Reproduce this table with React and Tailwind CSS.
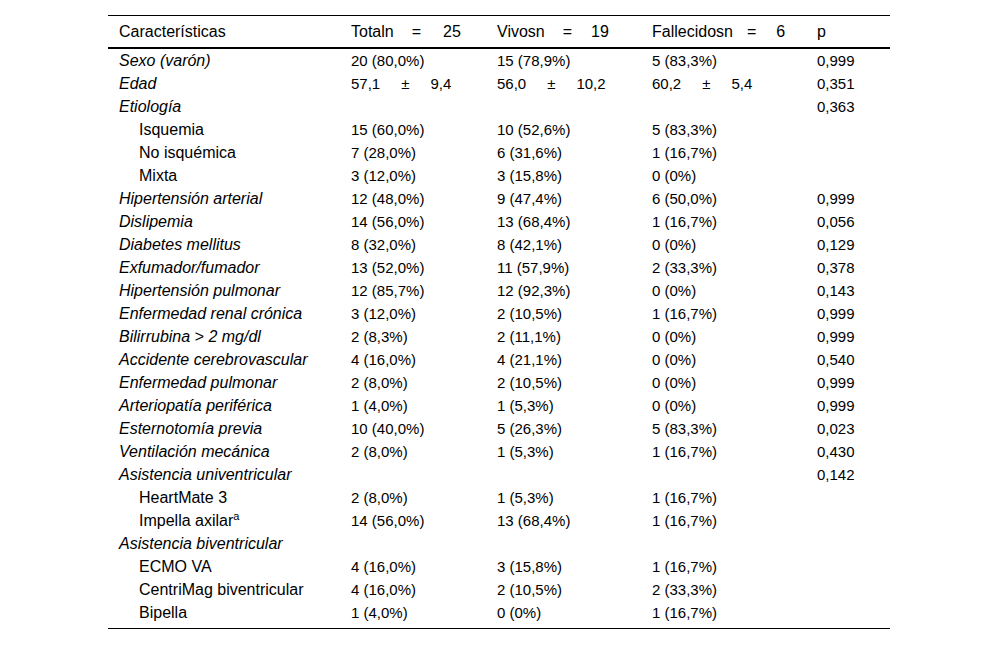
import React from "react";

const rows = [
  { label: "Sexo (varón)", it: true, c: ["20 (80,0%)", "15 (78,9%)", "5 (83,3%)", "0,999"] },
  { label: "Edad", it: true, pm: [["57,1", "9,4"], ["56,0", "10,2"], ["60,2", "5,4"]], p: "0,351" },
  { label: "Etiología", it: true, c: ["", "", "", "0,363"] },
  { label: "Isquemia", ind: true, c: ["15 (60,0%)", "10 (52,6%)", "5 (83,3%)", ""] },
  { label: "No isquémica", ind: true, c: ["7 (28,0%)", "6 (31,6%)", "1 (16,7%)", ""] },
  { label: "Mixta", ind: true, c: ["3 (12,0%)", "3 (15,8%)", "0 (0%)", ""] },
  { label: "Hipertensión arterial", it: true, c: ["12 (48,0%)", "9 (47,4%)", "6 (50,0%)", "0,999"] },
  { label: "Dislipemia", it: true, c: ["14 (56,0%)", "13 (68,4%)", "1 (16,7%)", "0,056"] },
  { label: "Diabetes mellitus", it: true, c: ["8 (32,0%)", "8 (42,1%)", "0 (0%)", "0,129"] },
  { label: "Exfumador/fumador", it: true, c: ["13 (52,0%)", "11 (57,9%)", "2 (33,3%)", "0,378"] },
  { label: "Hipertensión pulmonar", it: true, c: ["12 (85,7%)", "12 (92,3%)", "0 (0%)", "0,143"] },
  { label: "Enfermedad renal crónica", it: true, c: ["3 (12,0%)", "2 (10,5%)", "1 (16,7%)", "0,999"] },
  { label: "Bilirrubina > 2 mg/dl", it: true, c: ["2 (8,3%)", "2 (11,1%)", "0 (0%)", "0,999"] },
  { label: "Accidente cerebrovascular", it: true, c: ["4 (16,0%)", "4 (21,1%)", "0 (0%)", "0,540"] },
  { label: "Enfermedad pulmonar", it: true, c: ["2 (8,0%)", "2 (10,5%)", "0 (0%)", "0,999"] },
  { label: "Arteriopatía periférica", it: true, c: ["1 (4,0%)", "1 (5,3%)", "0 (0%)", "0,999"] },
  { label: "Esternotomía previa", it: true, c: ["10 (40,0%)", "5 (26,3%)", "5 (83,3%)", "0,023"] },
  { label: "Ventilación mecánica", it: true, c: ["2 (8,0%)", "1 (5,3%)", "1 (16,7%)", "0,430"] },
  { label: "Asistencia univentricular", it: true, c: ["", "", "", "0,142"] },
  { label: "HeartMate 3", ind: true, c: ["2 (8,0%)", "1 (5,3%)", "1 (16,7%)", ""] },
  { label: "Impella axilar", sup: "a", ind: true, c: ["14 (56,0%)", "13 (68,4%)", "1 (16,7%)", ""] },
  { label: "Asistencia biventricular", it: true, c: ["", "", "", ""] },
  { label: "ECMO VA", ind: true, c: ["4 (16,0%)", "3 (15,8%)", "1 (16,7%)", ""] },
  { label: "CentriMag biventricular", ind: true, c: ["4 (16,0%)", "2 (10,5%)", "2 (33,3%)", ""] },
  { label: "Bipella", ind: true, c: ["1 (4,0%)", "0 (0%)", "1 (16,7%)", ""] },
];

function PM({ a, b }) {
  return (
    <span>
      {a}
      <span className="ml-[21px]">±</span>
      <span className="ml-[21px]">{b}</span>
    </span>
  );
}

export default function App() {
  const grid = "grid grid-cols-[232px_146px_155px_165px_84px]";
  return (
    <div
      className="w-[1000px] h-[645px] bg-white text-[#000] text-[15px]"
      style={{ fontFamily: '"Liberation Sans", Arial, sans-serif' }}
    >
      <div className="ml-[108px] w-[782px] pt-[15px]">
        <div className="border-t border-black">
          <div className={`${grid} h-[33px] items-center border-b-2 border-black text-[16px]`}>
            <div className="pl-[11px]">Características</div>
            <div className="pl-[11px] whitespace-nowrap">
              Totaln<span className="ml-[18px]">=</span><span className="ml-[22px]">25</span>
            </div>
            <div className="pl-[11px] whitespace-nowrap">
              Vivosn<span className="ml-[18px]">=</span><span className="ml-[19px]">19</span>
            </div>
            <div className="pl-[11px] whitespace-nowrap">
              Fallecidosn<span className="ml-[14px]">=</span><span className="ml-[20px]">6</span>
            </div>
            <div className="pl-[11px]">p</div>
          </div>
          <div className="border-b border-black pt-0 pb-[4px]">
            {rows.map((r, i) => (
              <div key={i} className={`${grid} h-[23px] items-center leading-[23px]`}>
                <div className={`${r.ind ? "pl-[31px]" : "pl-[11px]"} ${r.it ? "italic" : ""} whitespace-nowrap text-[16px]`}>
                  {r.label}
                  {r.sup && (
                    <span className="text-[11px] leading-none relative -top-[6px]">{r.sup}</span>
                  )}
                </div>
                {r.pm ? (
                  <>
                    <div className="pl-[11px] whitespace-nowrap"><PM a={r.pm[0][0]} b={r.pm[0][1]} /></div>
                    <div className="pl-[11px] whitespace-nowrap"><PM a={r.pm[1][0]} b={r.pm[1][1]} /></div>
                    <div className="pl-[11px] whitespace-nowrap"><PM a={r.pm[2][0]} b={r.pm[2][1]} /></div>
                    <div className="pl-[11px]">{r.p}</div>
                  </>
                ) : (
                  r.c.map((v, j) => (
                    <div key={j} className="pl-[11px] whitespace-nowrap">{v}</div>
                  ))
                )}
              </div>
            ))}
          </div>
        </div>
      </div>
    </div>
  );
}
